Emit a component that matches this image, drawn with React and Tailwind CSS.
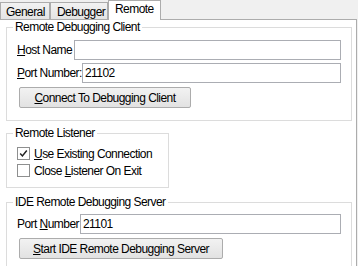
import React from "react";

// Win7-style "Remote" options page

function Tab({ label, selected, className }) {
  if (selected) {
    return (
      <div
        className={
          "relative z-10 -mb-px h-[20px] border border-b-0 border-[#acacac] bg-white leading-[17px] " +
          className
        }
      >
        {label}
      </div>
    );
  }
  return (
    <div
      className={
        "h-[17px] border border-b-0 border-[#acacac] bg-gradient-to-b from-[#f2f2f2] to-[#e4e4e4] leading-[18px] " +
        className
      }
    >
      {label}
    </div>
  );
}

function Group({ title, className, children }) {
  return (
    <fieldset className={"border border-[#dcdcdc] p-0 " + className}>
      <legend className="ml-[6px] px-[2px] leading-[14px]">{title}</legend>
      {children}
    </fieldset>
  );
}

function TextBox({ value }) {
  return (
    <div className="h-[20px] flex-1 border border-[#abadb3] bg-white pl-[2px] leading-[18px]">{value}</div>
  );
}

function Button({ children, className }) {
  return (
    <div
      className={
        "flex h-[21px] items-center justify-center rounded-[2px] border border-[#acacac] bg-gradient-to-b from-[#f2f2f2] to-[#e2e2e2] " +
        className
      }
    >
      {children}
    </div>
  );
}

function CheckBox({ checked, children }) {
  return (
    <div className="flex h-[17px] items-center">
      <div className="flex h-[13px] w-[13px] items-center justify-center border border-[#8e8f8f] bg-white">
        {checked && (
          <svg width="9" height="9" viewBox="0 0 9 9">
            <path d="M1.2 4.6 L3.4 6.9 L7.8 1.6" fill="none" stroke="#222" strokeWidth="1.5" />
          </svg>
        )}
      </div>
      <span className="ml-[4px]">{children}</span>
    </div>
  );
}

export default function App() {
  return (
    <div className="h-[266px] w-[358px] overflow-hidden bg-[#f0f0f0] font-['Liberation_Sans',Arial,sans-serif] text-[12px] tracking-[-0.55px] text-black">
      {/* tab strip */}
      <div className="flex h-[19px] items-end">
        <Tab label="General" className="w-[50px] pl-[5px]" />
        <Tab label="Debugger" className="w-[58px] pl-[6px]" />
        <Tab label="Remote" selected className="w-[53px] pl-[6px]" />
      </div>

      {/* tab page */}
      <div className="w-[357px] border-r border-t border-[#acacac] bg-white pl-[6px]">
        <Group title="Remote Debugging Client" className="w-[346px]">
          <div className="px-[10px] pb-[12px] pt-[6px]">
            <div className="flex h-[20px] items-center">
              <span className="w-[57px] shrink-0">
                <u>H</u>ost Name
              </span>
              <TextBox value="" />
            </div>
            <div className="mt-[3px] flex h-[20px] items-center">
              <span className="w-[65px] shrink-0">
                <u>P</u>ort Number:
              </span>
              <TextBox value="21102" />
            </div>
            <Button className="ml-[2px] mt-[4px] w-[172px]">
              <span>
                <u>C</u>onnect To Debugging Client
              </span>
            </Button>
          </div>
        </Group>

        <Group title="Remote Listener" className="mt-[5px] w-[163px]">
          <div className="px-[10px] pb-[8px] pt-[5px]">
            <CheckBox checked>
              <u>U</u>se Existing Connection
            </CheckBox>
            <CheckBox>
              Close <u>L</u>istener On Exit
            </CheckBox>
          </div>
        </Group>

        <Group title="IDE Remote Debugging Server" className="mt-[7px] w-[346px]">
          <div className="px-[10px] pb-[20px] pt-[5px]">
            <div className="flex h-[20px] items-center">
              <span className="w-[63px] shrink-0">
                Port <u>N</u>umber
              </span>
              <TextBox value="21101" />
            </div>
            <Button className="ml-[2px] mt-[4px] w-[204px]">
              <span>
                <u>S</u>tart IDE Remote Debugging Server
              </span>
            </Button>
          </div>
        </Group>
      </div>
    </div>
  );
}
